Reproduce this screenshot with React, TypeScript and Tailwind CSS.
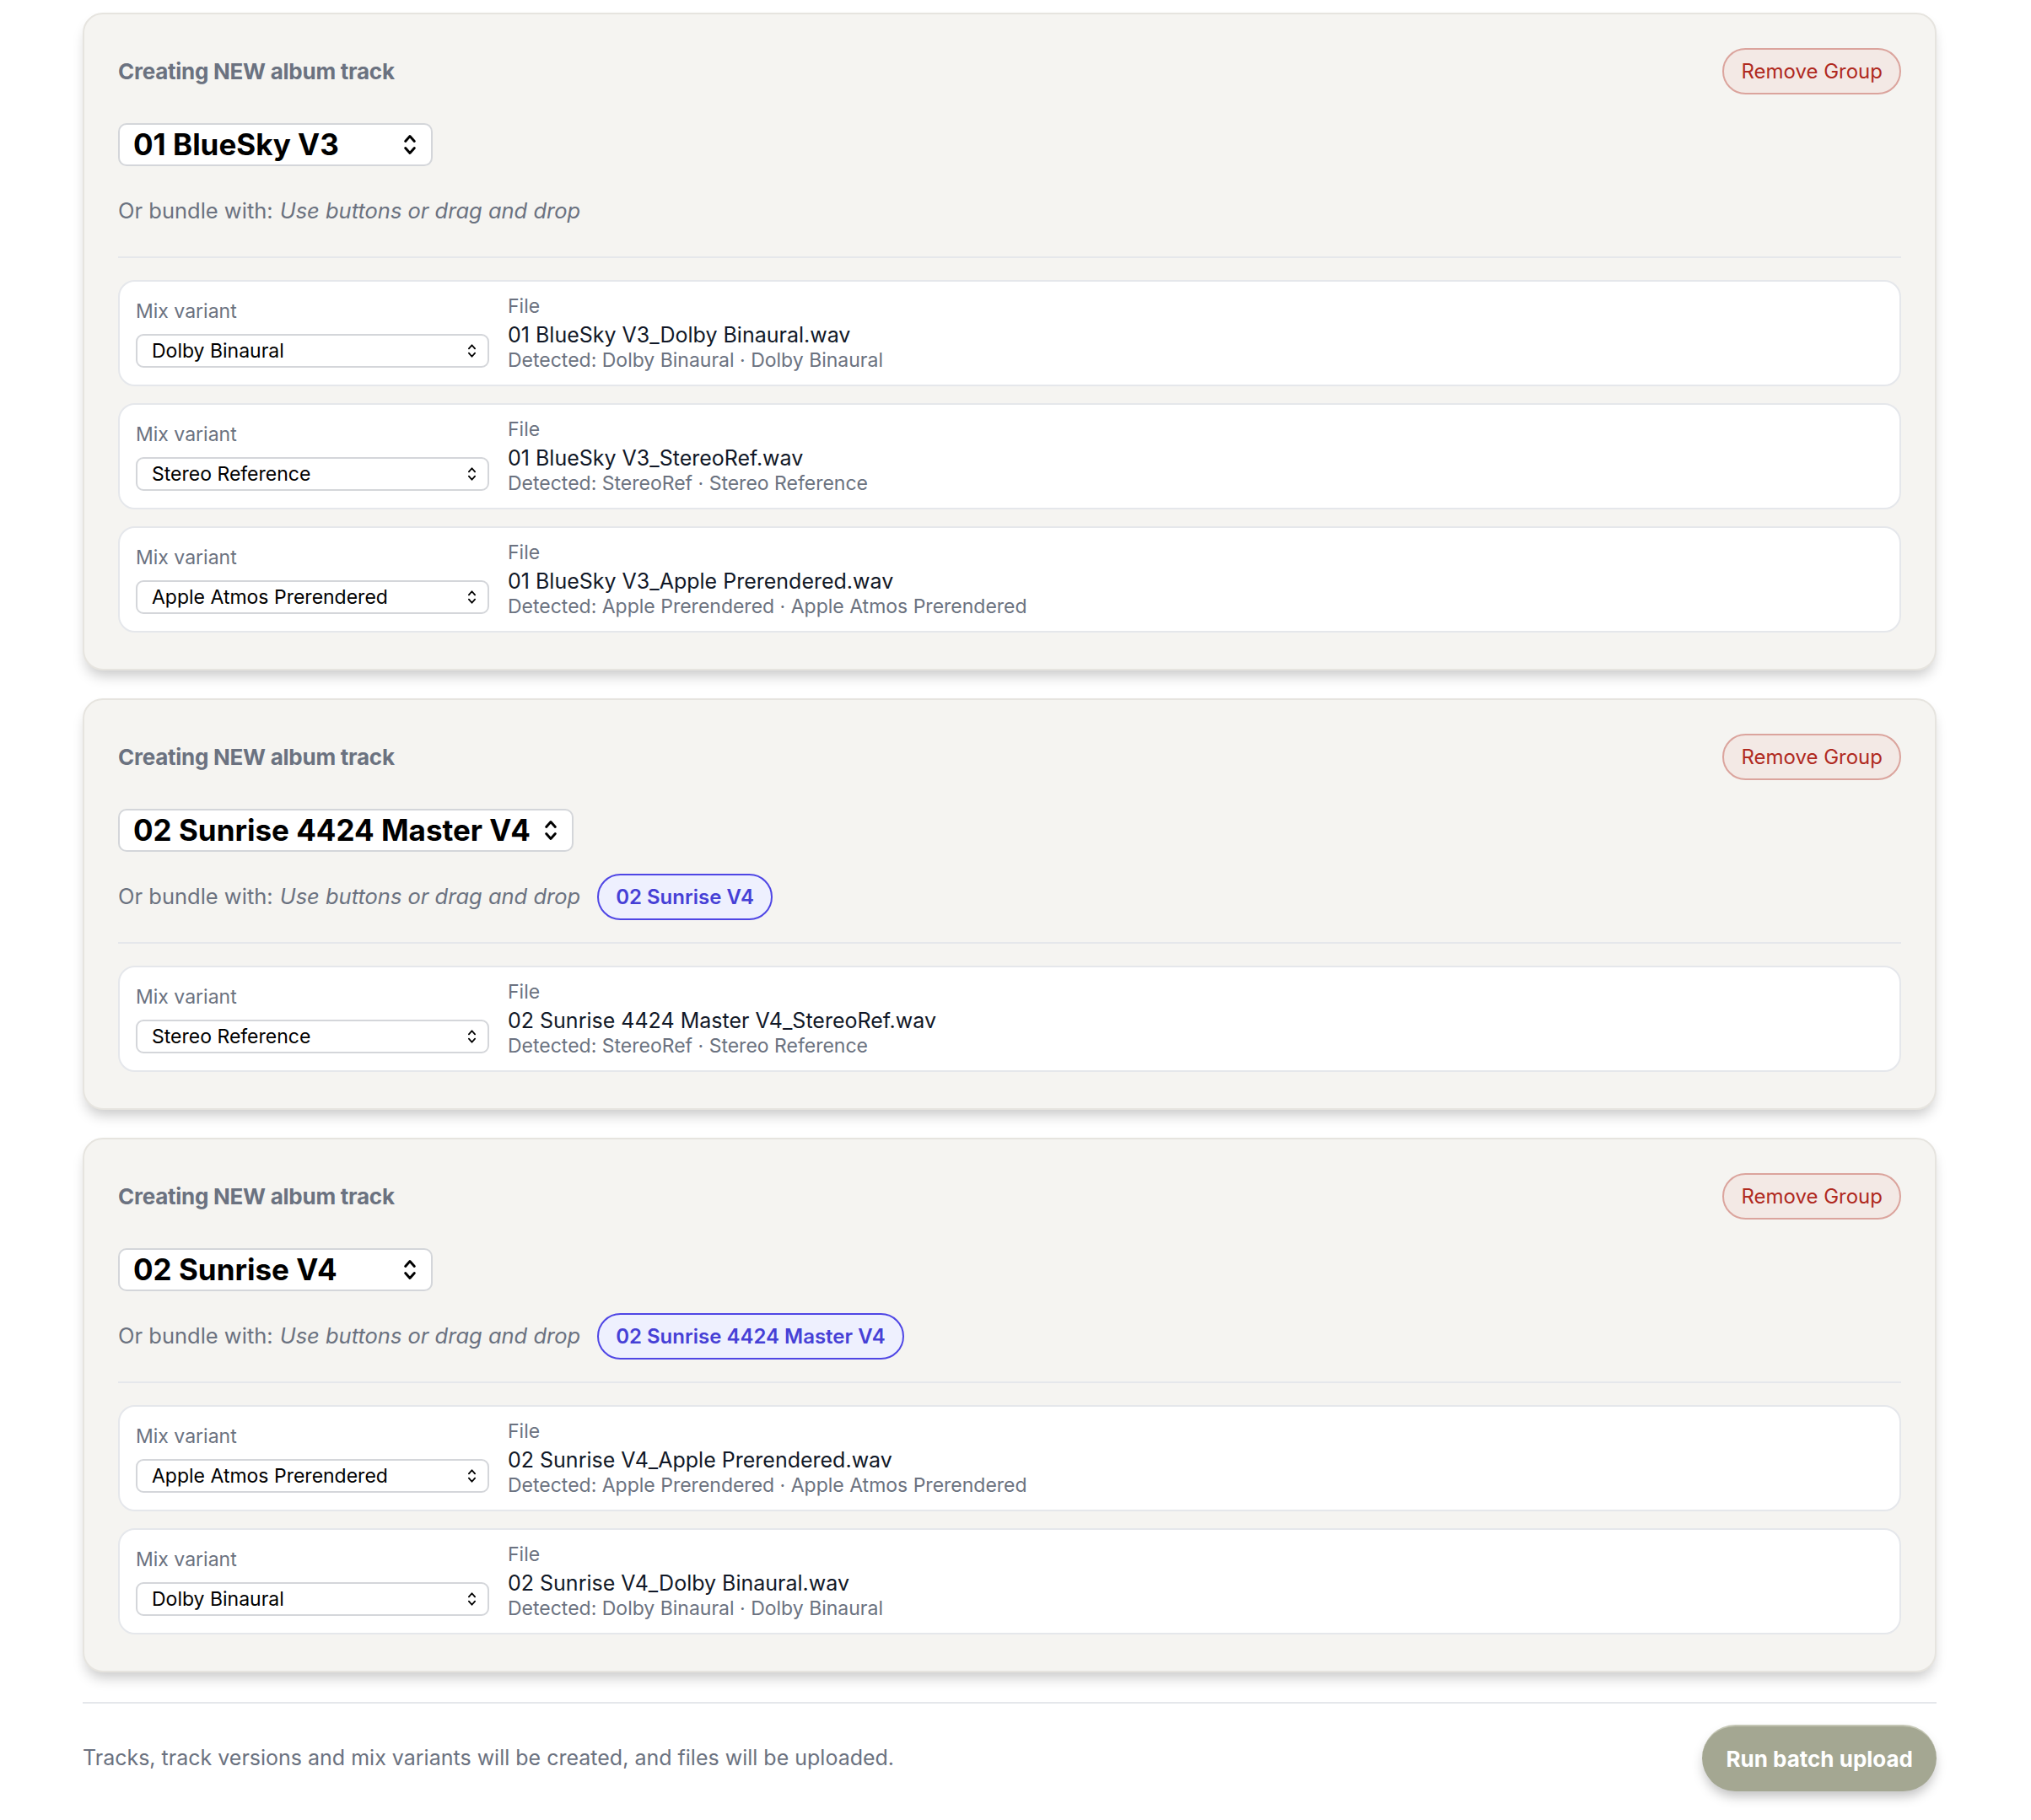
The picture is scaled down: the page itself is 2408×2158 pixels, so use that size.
import React from 'react';

type Row = { variant: string; file: string; detected: string };
type Group = { title: string; bundle?: string; rows: Row[] };

const groups: Group[] = [
    {
        title: '01 BlueSky V3',
        rows: [
            { variant: 'Dolby Binaural', file: '01 BlueSky V3_Dolby Binaural.wav', detected: 'Detected: Dolby Binaural · Dolby Binaural' },
            { variant: 'Stereo Reference', file: '01 BlueSky V3_StereoRef.wav', detected: 'Detected: StereoRef · Stereo Reference' },
            { variant: 'Apple Atmos Prerendered', file: '01 BlueSky V3_Apple Prerendered.wav', detected: 'Detected: Apple Prerendered · Apple Atmos Prerendered' },
        ],
    },
    {
        title: '02 Sunrise 4424 Master V4',
        bundle: '02 Sunrise V4',
        rows: [
            { variant: 'Stereo Reference', file: '02 Sunrise 4424 Master V4_StereoRef.wav', detected: 'Detected: StereoRef · Stereo Reference' },
        ],
    },
    {
        title: '02 Sunrise V4',
        bundle: '02 Sunrise 4424 Master V4',
        rows: [
            { variant: 'Apple Atmos Prerendered', file: '02 Sunrise V4_Apple Prerendered.wav', detected: 'Detected: Apple Prerendered · Apple Atmos Prerendered' },
            { variant: 'Dolby Binaural', file: '02 Sunrise V4_Dolby Binaural.wav', detected: 'Detected: Dolby Binaural · Dolby Binaural' },
        ],
    },
];

// up/down chevrons like the native select arrow
const UpDown = ({ className }: { className: string }) => (
    <svg viewBox="0 0 12 20" fill="none" stroke="currentColor" strokeLinecap="round" strokeLinejoin="round" className={className}>
        <path d="M2 7 6 2.5 10 7" />
        <path d="M2 13l4 4.5 4-4.5" />
    </svg>
);

const FileRow = ({ row }: { row: Row }) => (
    <div className="flex h-[126px] items-center rounded-[20px] border-2 border-[#e5e7eb] bg-white px-[19px]">
        <div className="w-[419px] shrink-0">
            <div className="text-[23px] leading-[30px] text-[#6b7280]">Mix variant</div>
            <div className="mt-[12px] flex h-[40px] items-center justify-between rounded-[9px] border-2 border-[#d4d6da] bg-white pl-[17px] pr-[13px] text-[23px] text-black">
                <span>{row.variant}</span>
                <UpDown className="h-[18px] w-[11px] stroke-[2] text-black" />
            </div>
        </div>
        <div className="ml-[22px] flex flex-col">
            <div className="text-[23px] leading-[28px] text-[#6b7280]">File</div>
            <div className="mt-[4px] text-[25px] leading-[32px] text-[#111827]">{row.file}</div>
            <div className="text-[23px] leading-[28px] text-[#6b7280]">{row.detected}</div>
        </div>
    </div>
);

const GroupCard = ({ group }: { group: Group }) => (
    <div className="rounded-[24px] border-2 border-[#e6e4df] bg-[#f5f4f1] px-[40px] pb-[43px] pt-[40px] shadow-[0_10px_16px_-4px_rgba(0,0,0,0.22)]">
        <div className="flex h-[55px] items-center justify-between">
            <h2 className="text-[26px] font-bold tracking-[-0.01em] text-[#6b7280]">Creating NEW album track</h2>
            <button className="h-[55px] rounded-full border-2 border-[#dba49d] bg-[#f3e9e5] px-[20px] text-[24px] text-[#b02a1f]">
                Remove Group
            </button>
        </div>

        <div className="mt-[34px] flex h-[51px] w-fit min-w-[373px] items-center justify-between gap-[16px] rounded-[10px] border-2 border-[#d4d6da] bg-white pl-[16px] pr-[17px]">
            <span className="text-[35px] font-bold text-black">{group.title}</span>
            <UpDown className="h-[27px] w-[16px] stroke-[2.2] text-black" />
        </div>

        <div className="mt-[26px] flex h-[55px] items-center text-[25.5px] text-[#6b7280]">
            <span>Or bundle with:</span>
            <span className="ml-[8px] italic">Use buttons or drag and drop</span>
            {group.bundle && (
                <span className="ml-[20px] flex h-[55px] items-center rounded-full border-2 border-[#4f46e5] bg-[#eef0fe] px-[20px] text-[24px] font-semibold text-[#4640d6]">
                    {group.bundle}
                </span>
            )}
        </div>

        <div className="mt-[26px] h-[2px] bg-[#e5e7eb]" />

        <div className="mt-[26px] flex flex-col gap-[20px]">
            {group.rows.map((row) => (
                <FileRow key={row.file} row={row} />
            ))}
        </div>
    </div>
);

const App: React.FC = () => {
    return (
        <div className="min-h-screen bg-white pl-[98px] pr-[112px] pt-[15px] font-['Inter',sans-serif]">
            <div className="flex flex-col gap-[33px]">
                {groups.map((g) => (
                    <GroupCard key={g.title} group={g} />
                ))}
            </div>

            <div className="mt-[35px] h-[2px] bg-[#e5e7eb]" />

            <div className="mt-[25px] flex items-center justify-between">
                <p className="text-[25px] text-[#6b7280]">
                    Tracks, track versions and mix variants will be created, and files will be uploaded.
                </p>
                <button className="h-[79px] rounded-full border-t-2 border-[#c4c6b4] bg-[#a4a792] px-[28px] text-[26px] font-bold text-white shadow-[0_8px_14px_-2px_rgba(0,0,0,0.25)]">
                    Run batch upload
                </button>
            </div>
        </div>
    );
};

export default App;
